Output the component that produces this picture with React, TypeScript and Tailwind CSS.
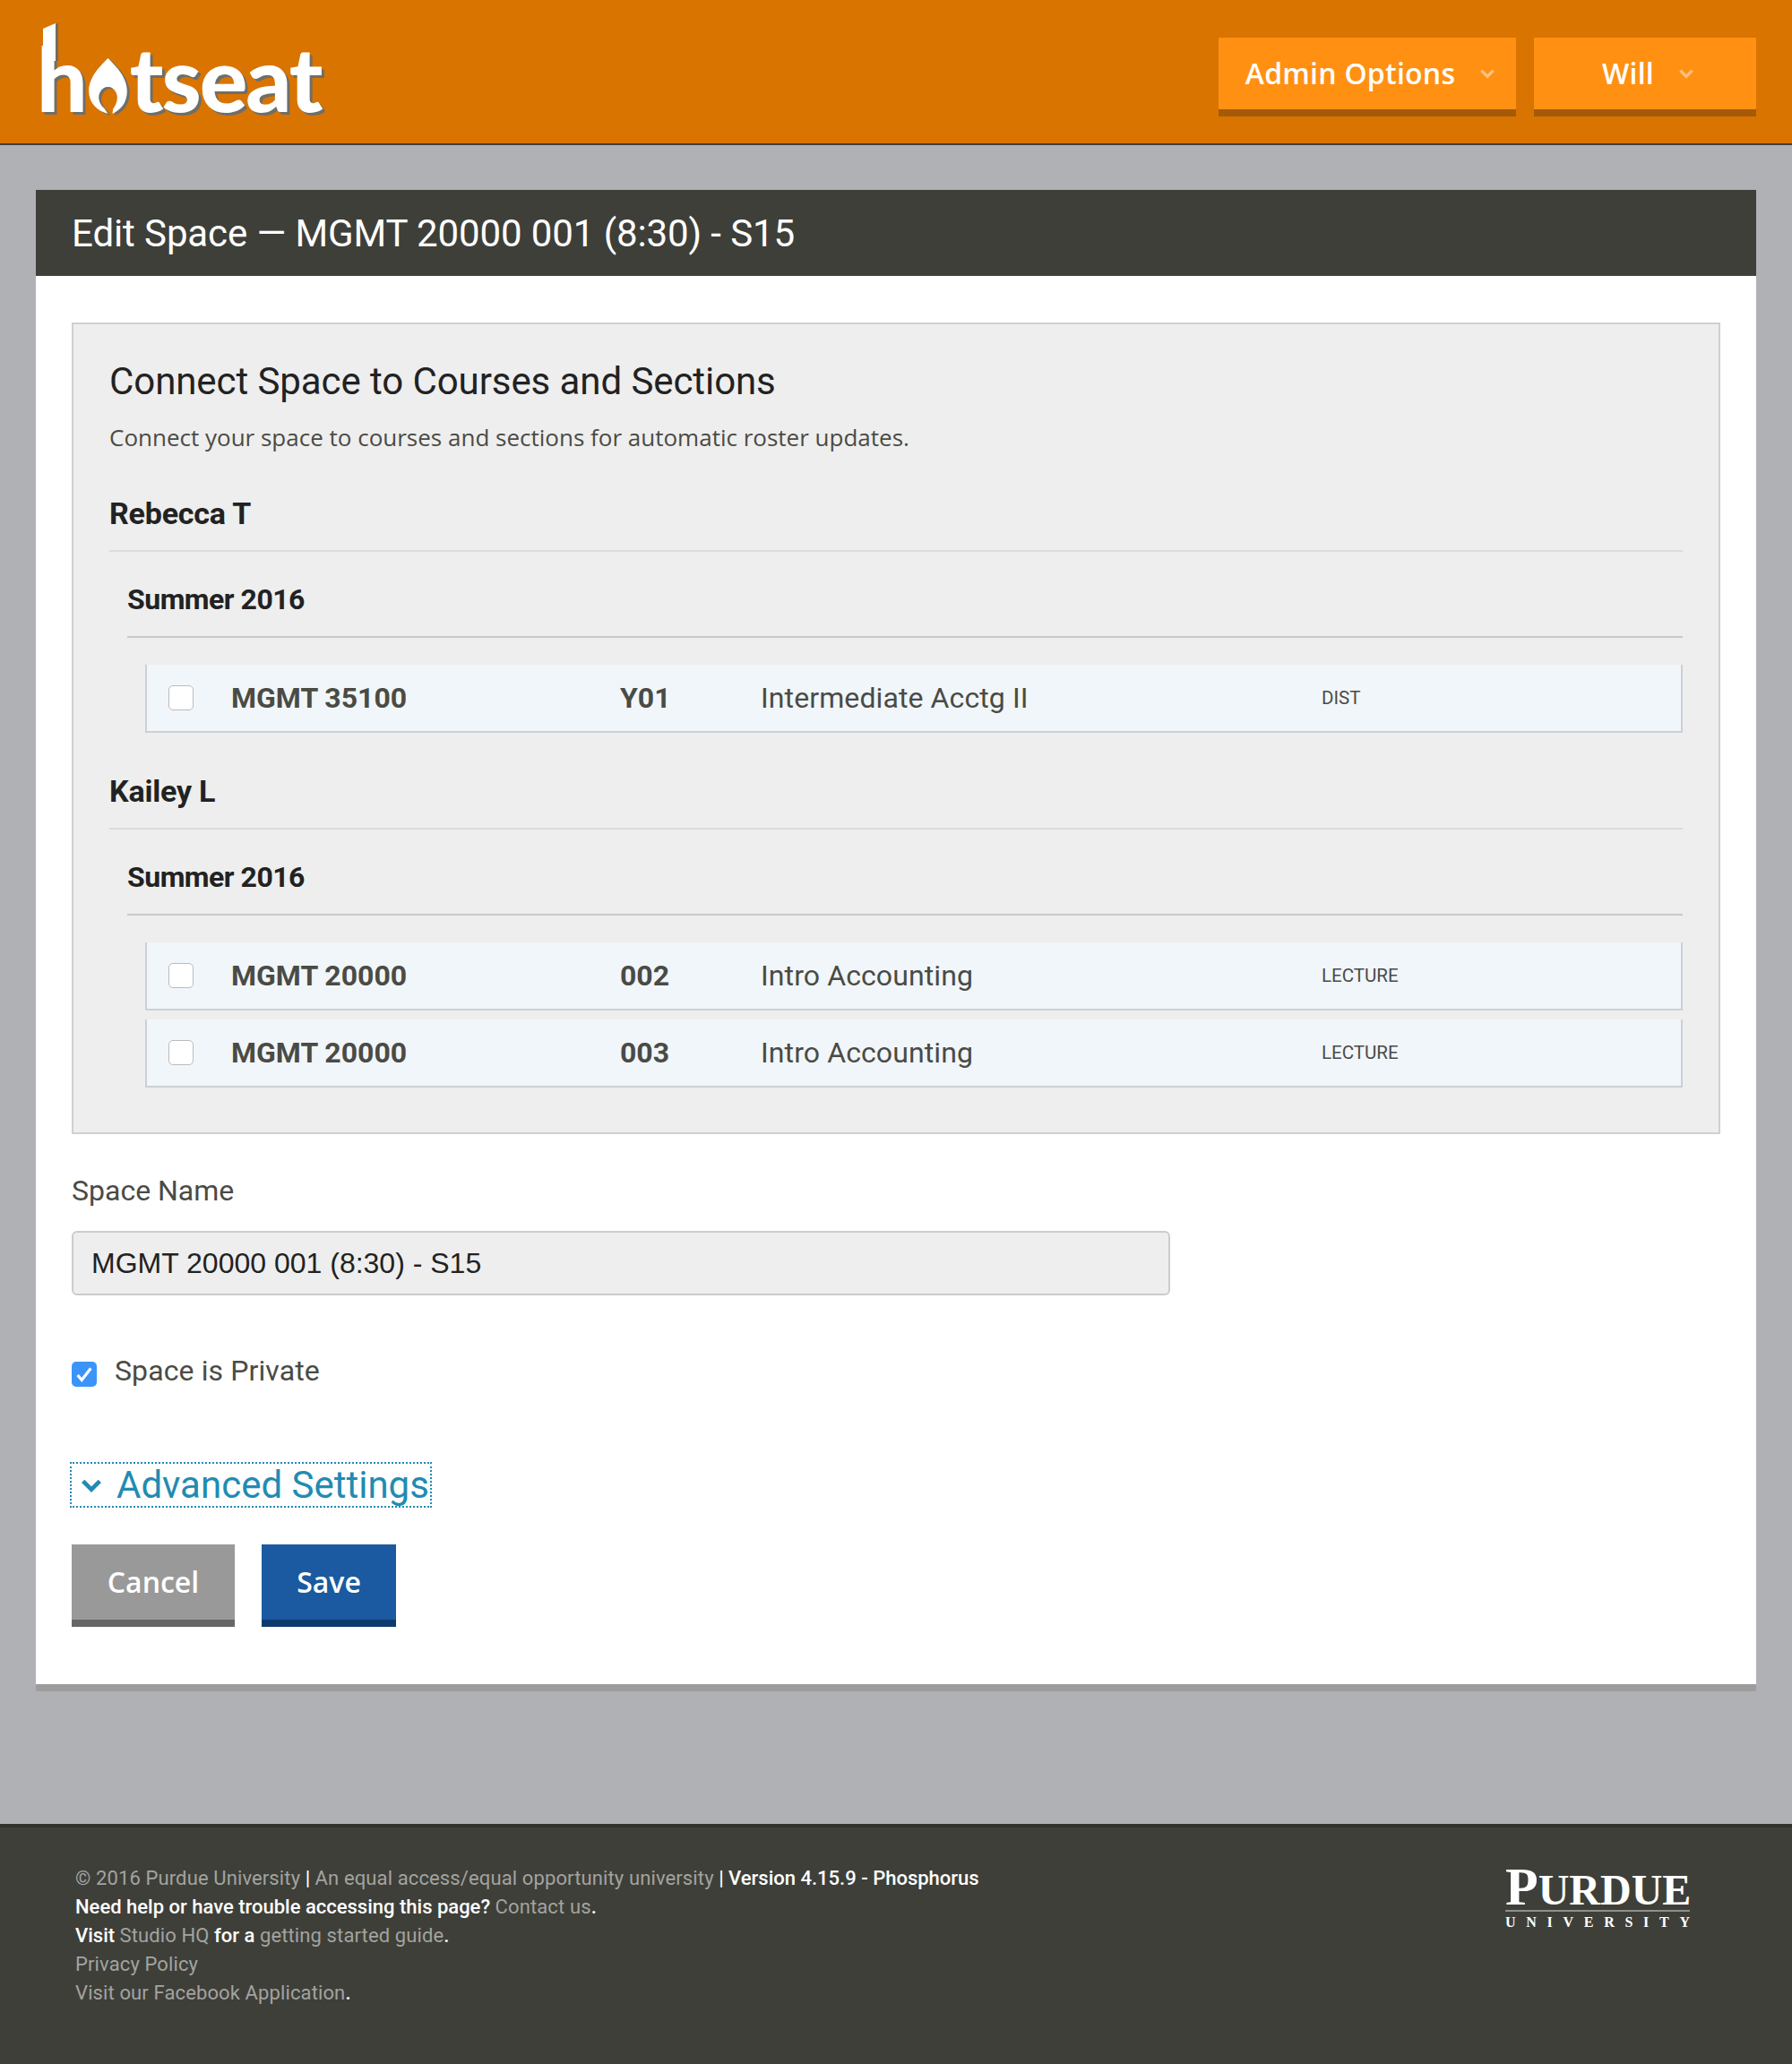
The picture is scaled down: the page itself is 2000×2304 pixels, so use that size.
const roboto = "font-['Roboto',sans-serif]";
const openSans = "font-['Open_Sans',sans-serif]";
const muted = "font-normal tracking-[0.12px] text-[#a3a3a0]";

const Chevron = ({ className }: { className: string }) => (
	<svg viewBox="0 0 24 24" fill="none" stroke="currentColor" strokeWidth="4" className={`shrink-0 ${className}`}>
		<path d="M4 8l8 8 8-8" />
	</svg>
);

const FLAME_PATH =
	"M24 0C34 10 46 22 46 38C46 52 38 60 29 64L30 58C35 52 36 44 33 39C31 35 28 33 24 33C20 33 17 35 15 39C12 44 13 52 20 58L24 64C12 61 2 52 2 38C2 22 14 10 24 0Z";

const Flame = () => (
	<svg viewBox="0 0 48 66" className="mx-[1px] mb-[7px] h-[64px] w-[47px] self-end overflow-visible">
		<path transform="translate(3 2)" fill="#6e6e6a" d={FLAME_PATH} />
		<path fill="#ffffff" d={FLAME_PATH} />
	</svg>
);

const Logo = () => (
	<div className="ml-[41px] mt-[30px] flex h-[106px] items-end font-['Lato',sans-serif] text-[100px] leading-[100px] font-black tracking-[-2px] text-white [text-shadow:3px_3px_0_#6e6e6a]">
		<span className="relative inline-block">
			h
			{/* the ascender of the logo's h is taller than Lato's */}
			<svg viewBox="0 0 20 46" className="absolute left-[7px] top-[-10px] h-[46px] w-[20px] overflow-visible">
				<path transform="translate(3 0)" fill="#6e6e6a" d="M0 6L14 0V42H0Z" />
				<path fill="#ffffff" d="M0 6L14 0V42H0Z" />
			</svg>
		</span>
		<Flame />
		<span>tseat</span>
	</div>
);

const HeaderButton = ({ label, width, gap }: { label: string; width: string; gap: string }) => (
	<div
		className={`flex h-[88px] items-center justify-center border-b-[8px] border-[#a45a08] bg-[#ff9012] pl-[8px] text-[32px] font-semibold tracking-[0.25px] text-white ${openSans} ${width} ${gap}`}
	>
		<span>{label}</span>
		<Chevron className="h-[20px] w-[20px] text-[#ffc182]" />
	</div>
);

const courseRow = (code: string, section: string, title: string, type: string) => (
	<div className="flex h-[76px] items-center border-b-[2px] border-l-[2px] border-r-[2px] border-[#ccd0d6] bg-[#f1f6fa] text-[#4a4b45]">
		<span className="ml-[24px] h-[28px] w-[28px] rounded-[5px] border-[1px] border-[#bbb] bg-white" />
		<span className={`ml-[42px] w-[434px] text-[32px] font-bold ${roboto}`}>{code}</span>
		<span className={`w-[157px] text-[32px] font-bold ${roboto}`}>{section}</span>
		<span className={`w-[626px] text-[32px] tracking-[0.1px] ${roboto}`}>{title}</span>
		<span className={`text-[20.5px] ${roboto}`}>{type}</span>
	</div>
);

const groups = [
	{
		name: "Rebecca T",
		term: "Summer 2016",
		courses: [["MGMT 35100", "Y01", "Intermediate Acctg II", "DIST"]],
	},
	{
		name: "Kailey L",
		term: "Summer 2016",
		courses: [
			["MGMT 20000", "002", "Intro Accounting", "LECTURE"],
			["MGMT 20000", "003", "Intro Accounting", "LECTURE"],
		],
	},
];

const PurdueLogo = () => (
	<div className="mr-[114px] mt-[43px] w-[206px] text-white font-['Liberation_Serif',serif]">
		<div className="flex h-[51px] items-baseline border-b-[2px] border-[#8f908b] leading-[46px] font-bold">
			<span className="text-[60px]">P</span>
			<span className="text-[48px]">URDUE</span>
		</div>
		<div className="mt-[2px] flex justify-between text-[16px] leading-[20px] font-bold">
			{"UNIVERSITY".split("").map((c, i) => (
				<span key={i}>{c}</span>
			))}
		</div>
	</div>
);

export default function App() {
	return (
		<div className={`flex min-h-[2304px] flex-col bg-[#b0b1b5] ${roboto}`}>
			<header className="flex h-[162px] justify-between border-b-[2px] border-[#3e3f39] bg-[#d97400]">
				<Logo />
				<div className="mr-[40px] mt-[42px] flex gap-[20px]">
					<HeaderButton label="Admin Options" width="w-[332px]" gap="gap-[26px]" />
					<HeaderButton label="Will" width="w-[248px]" gap="gap-[26px]" />
				</div>
			</header>

			<main className="mx-[40px] mt-[50px] flex-1">
				<h1 className="flex h-[96px] items-center bg-[#3e3f39] pl-[40px] text-[42px] tracking-[-0.1px] text-white">
					Edit Space — MGMT 20000 001 (8:30) - S15
				</h1>
				<div className="border-b-[8px] border-[#9c9c9c] bg-white px-[40px] pt-[52px] pb-[64px]">
					<section className="h-[906px] border-[2px] border-[#d0d0d0] bg-[#eeeeee] pl-[40px] pr-[40px]">
						<h2 className="mt-[36px] text-[42px] leading-[56px] tracking-[-0.08px] text-[#222]">
							Connect Space to Courses and Sections
						</h2>
						<p className={`mt-[14px] text-[26px] leading-[40px] text-[#4a4b45] ${openSans}`}>
							Connect your space to courses and sections for automatic roster updates.
						</p>
						{groups.map((group) => (
							<div key={group.name}>
								<h3 className="mt-[45px] border-b-[2px] border-[#dcdcdc] pb-[21px] text-[34px] leading-[40px] font-bold tracking-[-0.2px] text-[#222]">
									{group.name}
								</h3>
								<div className="ml-[20px]">
									<h4 className="mt-[33px] border-b-[2px] border-[#c8c8c8] pb-[21px] text-[32px] leading-[40px] font-bold tracking-[-0.5px] text-[#222]">
										{group.term}
									</h4>
									<div className="ml-[20px] mt-[30px] flex flex-col gap-[10px]">
										{group.courses.map((c) => (
											<div key={c[1]}>{courseRow(c[0], c[1], c[2], c[3])}</div>
										))}
									</div>
								</div>
							</div>
						))}
					</section>

					<label className="mt-[43px] block text-[32px] leading-[40px] text-[#4a4b45]">Space Name</label>
					<div className="mt-[25px] flex h-[72px] w-[1226px] items-center rounded-[6px] border-[2px] border-[#cccccc] bg-[#eeeeee] pl-[20px] font-['Liberation_Sans',sans-serif] text-[32px] text-[#222]">
						MGMT 20000 001 (8:30) - S15
					</div>

					<div className="mt-[64px] flex items-start gap-[20px]">
						<span className="mt-[10px] flex h-[28px] w-[28px] items-center justify-center rounded-[5px] bg-[#3b95f8]">
							<svg viewBox="0 0 24 24" fill="none" stroke="#fff" strokeWidth="3.5" className="h-[22px] w-[22px]">
								<path d="M4 13l5 6L20 5" />
							</svg>
						</span>
						<span className="text-[32px] leading-[40px] tracking-[0.1px] text-[#4a4b45]">Space is Private</span>
					</div>

					<div className="-ml-[2px] mt-[82px] flex h-[51px] w-[404px] items-center gap-[14px] border-[2px] border-dotted border-[#228bb2] pl-[8px] text-[42px] whitespace-nowrap text-[#228bb2]">
						<Chevron className="h-[28px] w-[28px]" />
						<span>Advanced Settings</span>
					</div>

					<div className={`mt-[41px] flex gap-[30px] text-[32px] font-semibold text-white ${openSans}`}>
						<button className="h-[92px] w-[182px] border-b-[8px] border-[#666666] bg-[#999999]">Cancel</button>
						<button className="h-[92px] w-[150px] border-b-[8px] border-[#0d3a6e] bg-[#1b5aa0]">Save</button>
					</div>
				</div>
			</main>

			<footer className="flex h-[268px] justify-between border-t-[4px] border-[#32332e] bg-[#3e3f39] text-[22px] leading-[32px] text-white">
				<div className="ml-[84px] mt-[41px] font-medium">
					<div>
						<span className={muted}>© 2016 Purdue University</span> |{" "}
						<span className={muted}>An equal access/equal opportunity university</span> | Version 4.15.9 - Phosphorus
					</div>
					<div>
						Need help or have trouble accessing this page? <span className={muted}>Contact us</span>.
					</div>
					<div>
						Visit <span className={muted}>Studio HQ</span> for a <span className={muted}>getting started guide</span>.
					</div>
					<div className={muted}>Privacy Policy</div>
					<div>
						<span className={muted}>Visit our Facebook Application</span>.
					</div>
				</div>
				<PurdueLogo />
			</footer>
		</div>
	);
}
